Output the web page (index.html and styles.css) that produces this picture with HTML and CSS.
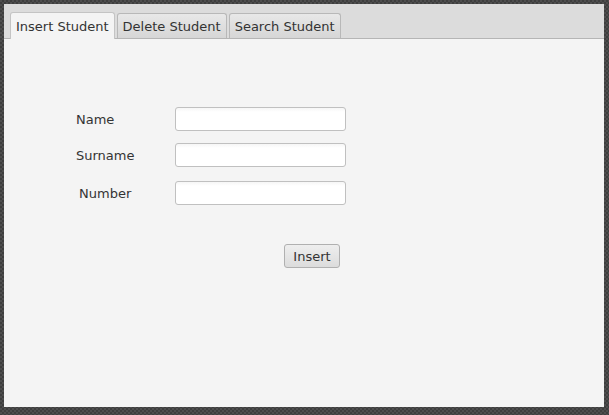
FILE: index.html
```html
<!DOCTYPE html>
<html>
<head>
<meta charset="utf-8">
<link rel="stylesheet" href="styles.css">
</head>
<body>
<div class="window">
  <div class="tabbar">
    <div class="tab active">Insert Student</div>
    <div class="tab">Delete Student</div>
    <div class="tab">Search Student</div>
  </div>
  <div class="content">
    <div class="form">
      <label class="lbl">Name</label>
      <input class="field" type="text">
      <label class="lbl">Surname</label>
      <input class="field" type="text">
      <label class="lbl num">Number</label>
      <input class="field" type="text">
      <button class="btn">Insert</button>
    </div>
  </div>
</div>
</body>
</html>
```
FILE: styles.css
```css
html, body {
  margin: 0;
  padding: 0;
  height: 100%;
}
body {
  background-color: #464646;
  background-image: repeating-conic-gradient(#3e3e3e 0 25%, #4e4e4e 0 50%);
  background-size: 4px 4px;
  font-family: "DejaVu Sans", sans-serif;
  font-size: 13px;
  color: #333;
  padding: 4px 5px 8px 4px;
  box-sizing: border-box;
}
.window {
  height: 403px;
  width: 600px;
  background: #f4f4f4;
  display: flex;
  flex-direction: column;
}
.tabbar {
  height: 35px;
  background: #dcdcdc;
  border-bottom: 1px solid #b5b5b5;
  display: flex;
  align-items: flex-end;
  padding-left: 6px;
  gap: 2px;
  box-sizing: border-box;
}
.tab {
  height: 25px;
  box-sizing: border-box;
  padding: 1px 5px 0 5px;
  border: 1px solid #b8b8b8;
  border-bottom: none;
  border-radius: 3px 3px 0 0;
  background: linear-gradient(#e8e8e8, #d6d6d6);
  line-height: 24px;
  color: #333;
  margin-bottom: 0;
}
.tab.active {
  background: #f4f4f4;
  height: 27px;
  line-height: 26px;
  margin-bottom: -1px;
  border-color: #c4c4c4;
}
.content {
  flex: 1;
  padding: 68px 0 0 72px;
}
.form {
  display: grid;
  grid-template-columns: 99px 171px;
  row-gap: 12px;
  align-items: center;
}
.lbl {
  color: #333;
  padding-left: 0;
}
.lbl.num {
  padding-left: 3px;
  margin-top: 2px;
}
.field {
  height: 24px;
  box-sizing: border-box;
  border: 1px solid #c0c0c0;
  border-radius: 3px;
  background: linear-gradient(#f6f6f6, #ffffff 4px);
  margin: 0;
  padding: 0 6px;
  font: inherit;
}
.num + .field {
  margin-top: 2px;
}
.btn {
  grid-column: 2;
  justify-self: end;
  margin: 27px 6px 0 0;
  width: 56px;
  height: 24px;
  font: inherit;
  color: #333;
  border: 1px solid #b0b0b0;
  border-radius: 3px;
  background: linear-gradient(#eeeeee, #dcdcdc);
  padding: 0;
}
```
